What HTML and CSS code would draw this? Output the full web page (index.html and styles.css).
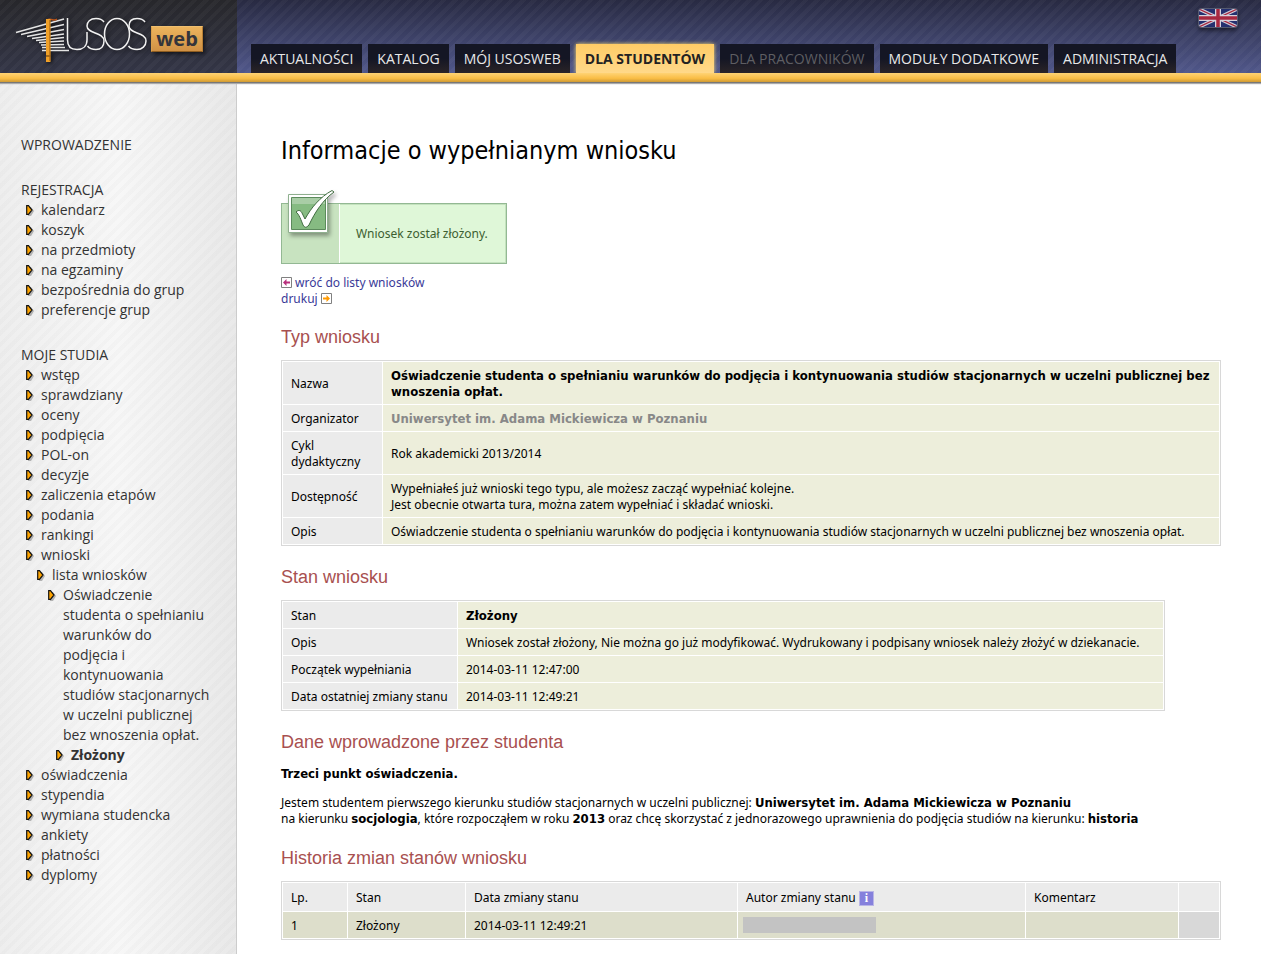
FILE: index.html
```html
<!DOCTYPE html>
<html lang="pl">
<head>
<meta charset="utf-8">
<title>USOSweb – Informacje o wypełnianym wniosku</title>
<link rel="stylesheet" href="styles.css">
</head>
<body>
<header class="top">
  <a class="brand" href="#" aria-label="USOSweb">
    <svg class="logo" width="200" height="60" viewBox="10 8 200 60" aria-hidden="true">
      <g stroke="#e4e4e4" fill="none" stroke-width="1.5">
        <path d="M16 32.500 64 19M21 34.500 64 24.500M27 36.500 64 29.500M32 38.500 64 34M36 40.500 64 37.500M39 42.500 64 41M41 45 64 44.500M42 47.500H65M42 50.500H69"/>
      </g>
      <path d="M48 19.500C52 18 54 22 57 19" stroke="#b8541c" stroke-width="1.500" fill="none"/>
      <path d="M46 19h4.500v43h-4.500z" fill="#f0a028"/><path d="M46 56h4.500" stroke="#5a3408"/>
      <path d="M49.800 20v41" stroke="#b06a14"/>
      <g stroke="#f2f2f2" fill="none" stroke-width="1.500">
        <path d="M67.500 18V40C67.500 46 71 49.500 77 49.500S87 46 87 40V32"/>
        <path d="M104 22C102 19 99 18.500 96 18.500 90 18.500 87 22 87 26 87 34 104 32 104 41 104 46 101 49.500 96 49.500 92 49.500 89 48 87.500 46"/>
        <ellipse cx="117" cy="34" rx="12.500" ry="15.500"/>
        <path d="M145 22C143 19 140 18.500 137 18.500 131 18.500 129 22 129 26 129 34 146 32 146 41 146 46 142 49.500 137 49.500 133 49.500 130 48 128.500 46"/>
      </g>
    </svg>
    <span class="web">web</span>
  </a>
  <nav class="tabs">
    <a href="#">AKTUALNOŚCI</a>
    <a href="#">KATALOG</a>
    <a href="#">MÓJ USOSWEB</a>
    <a href="#" class="on">DLA STUDENTÓW</a>
    <a href="#" class="off">DLA PRACOWNIKÓW</a>
    <a href="#">MODUŁY DODATKOWE</a>
    <a href="#">ADMINISTRACJA</a>
  </nav>
  <a class="flag" href="#" aria-label="English">
    <svg width="38" height="18" viewBox="0 0 38 18" aria-hidden="true">
      <path fill="#25306f" d="M0 0h38v18H0z"/>
      <path d="M0 0 38 18M38 0 0 18" stroke="#cfcbd6" stroke-width="3.500"/>
      <path d="M0 0 38 18M38 0 0 18" stroke="#a82840" stroke-width="1.200"/>
      <path d="M19 0v18M0 9h38" stroke="#d6d2dc" stroke-width="6"/>
      <path d="M19 0v18M0 9h38" stroke="#a82840" stroke-width="3.500"/>
    </svg>
  </a>
</header>
<div class="gold"></div>
<div class="page">
  <aside class="side">
    <section><h3><a href="#">WPROWADZENIE</a></h3></section>
    <section>
      <h3><a href="#">REJESTRACJA</a></h3>
      <ul>
        <li><a href="#">kalendarz</a></li>
        <li><a href="#">koszyk</a></li>
        <li><a href="#">na przedmioty</a></li>
        <li><a href="#">na egzaminy</a></li>
        <li><a href="#">bezpośrednia do grup</a></li>
        <li><a href="#">preferencje grup</a></li>
      </ul>
    </section>
    <section>
      <h3><a href="#">MOJE STUDIA</a></h3>
      <ul>
        <li><a href="#">wstęp</a></li>
        <li><a href="#">sprawdziany</a></li>
        <li><a href="#">oceny</a></li>
        <li><a href="#">podpięcia</a></li>
        <li><a href="#">POL-on</a></li>
        <li><a href="#">decyzje</a></li>
        <li><a href="#">zaliczenia etapów</a></li>
        <li><a href="#">podania</a></li>
        <li><a href="#">rankingi</a></li>
        <li><a href="#">wnioski</a></li>
        <li class="l2"><a href="#">lista wniosków</a></li>
        <li class="l3"><a href="#">Oświadczenie studenta o spełnianiu warunków do podjęcia&nbsp;i kontynuowania studiów stacjonarnych w&nbsp;uczelni publicznej bez wnoszenia opłat.</a></li>
        <li class="l4"><a href="#">Złożony</a></li>
        <li><a href="#">oświadczenia</a></li>
        <li><a href="#">stypendia</a></li>
        <li><a href="#">wymiana studencka</a></li>
        <li><a href="#">ankiety</a></li>
        <li><a href="#">płatności</a></li>
        <li><a href="#">dyplomy</a></li>
      </ul>
    </section>
  </aside>
  <main class="main">
    <h1>Informacje o wypełnianym wniosku</h1>
    <div class="msg">
      <div class="msg-side">
        <svg class="check" width="52" height="52" viewBox="0 0 52 52" aria-hidden="true">
          <path d="M6.500 5.500h39v38h-39z" fill="#fff" stroke="#8fb08f"/>
          <path d="M9.500 8.500h34v32h-34z" fill="#86bb82" stroke="#5c8a5c"/>
          <path d="M10 9h33v6H10z" fill="#a9cda6"/>
          <path d="M14 23C17 20 19 22 20 24L23 30C29 19 38 8 50 1.500L52 3C41 11 33 23 27 36 24 39 23 39 21 36 19 31 17 25 14 23Z" fill="#fff" stroke="#3f6b3f"/>
        </svg>
      </div>
      <p>Wniosek został złożony.</p>
    </div>
    <p class="links">
      <a href="#"><svg width="11" height="11" viewBox="0 0 11 11" aria-hidden="true"><path d="M.5.5h10v10H.5z" fill="#fff" stroke="#808080"/><path d="M2 5.500 5.500 2v2.500H9v2H5.500V9z" fill="#b8307c"/></svg> wróć do listy wniosków</a><br>
      <a href="#">drukuj <svg width="11" height="11" viewBox="0 0 11 11" aria-hidden="true"><path d="M.5.5h10v10H.5z" fill="#fff" stroke="#808080"/><path d="M9 5.500 5.500 2v2.500H2v2h3.500V9z" fill="#ff9a00"/></svg></a>
    </p>

    <h2>Typ wniosku</h2>
    <table class="grey kind">
      <tr><th scope="row">Nazwa</th><td><b>Oświadczenie studenta o spełnianiu warunków do podjęcia i kontynuowania studiów stacjonarnych w uczelni publicznej bez wnoszenia opłat.</b></td></tr>
      <tr><th scope="row">Organizator</th><td><b class="dim">Uniwersytet im. Adama Mickiewicza w Poznaniu</b></td></tr>
      <tr><th scope="row">Cykl dydaktyczny</th><td>Rok akademicki 2013/2014</td></tr>
      <tr><th scope="row">Dostępność</th><td>Wypełniałeś już wnioski tego typu, ale możesz zacząć wypełniać kolejne.<br>Jest obecnie otwarta tura, można zatem wypełniać i składać wnioski.</td></tr>
      <tr><th scope="row">Opis</th><td>Oświadczenie studenta o spełnianiu warunków do podjęcia i kontynuowania studiów stacjonarnych w uczelni publicznej bez wnoszenia opłat.</td></tr>
    </table>

    <h2>Stan wniosku</h2>
    <table class="grey state">
      <tr><th scope="row">Stan</th><td><b>Złożony</b></td></tr>
      <tr><th scope="row">Opis</th><td>Wniosek został złożony, Nie można go już modyfikować. Wydrukowany i podpisany wniosek należy złożyć w dziekanacie.</td></tr>
      <tr><th scope="row">Początek wypełniania</th><td>2014-03-11 12:47:00</td></tr>
      <tr><th scope="row">Data ostatniej zmiany stanu</th><td>2014-03-11 12:49:21</td></tr>
    </table>

    <h2>Dane wprowadzone przez studenta</h2>
    <div class="text">
      <p><b>Trzeci punkt oświadczenia.</b></p>
      <p>Jestem studentem pierwszego kierunku studiów stacjonarnych w uczelni publicznej: <b>Uniwersytet im. Adama Mickiewicza w Poznaniu</b><br>na kierunku <b>socjologia</b>, które rozpocząłem w roku <b>2013</b> oraz chcę skorzystać z jednorazowego uprawnienia do podjęcia studiów na kierunku: <b>historia</b></p>
    </div>

    <h2>Historia zmian stanów wniosku</h2>
    <table class="grey history">
      <colgroup><col class="c-no"><col class="c-state"><col class="c-date"><col class="c-author"><col class="c-note"><col class="c-end"></colgroup>
      <thead><tr><th>Lp.</th><th>Stan</th><th>Data zmiany stanu</th><th>Autor zmiany stanu <span class="info">i</span></th><th>Komentarz</th><th></th></tr></thead>
      <tbody><tr><td>1</td><td>Złożony</td><td>2014-03-11 12:49:21</td><td class="who"><span class="redacted"></span></td><td></td><td class="end"></td></tr></tbody>
    </table>
  </main>
</div>
</body>
</html>
```
FILE: styles.css
```css
* { box-sizing: border-box; }
body {
  margin: 0;
  min-height: 100vh;
  display: flex;
  flex-direction: column;
  background: #fff;
  color: #000;
  font: 12px/16px "Noto Sans", "Open Sans", sans-serif;
}
a { text-decoration: none; color: #3a3a98; }
h1, h2, h3, p, ul { margin: 0; padding: 0; font-weight: normal; }

.top {
  display: flex;
  height: 73px;
  background:
    repeating-linear-gradient(135deg, rgba(255,255,255,.03) 0 4px, transparent 4px 8px),
    linear-gradient(#282a42, #50578a);
}
.brand {
  display: flex;
  width: 237px;
  position: relative;
  padding: 8px 0 0 10px;
  background:
    repeating-linear-gradient(135deg, rgba(255,255,255,.03) 0 4px, transparent 4px 8px),
    linear-gradient(#27272b, #333546);
}
.logo { filter: drop-shadow(2px 2px 2px rgba(0,0,0,.6)); }
.web {
  position: absolute;
  left: 151px;
  top: 26px;
  width: 52px;
  height: 26px;
  border: 1px solid;
  border-color: #f0bf70 #b87f35 #8f5d20 #d99f4c;
  background: linear-gradient(#edb45d, #d09145);
  box-shadow: 2px 2px 4px rgba(0,0,0,.6);
  color: #35353b;
  font: bold 20px/23px "Open Sans", "Noto Sans", sans-serif;
  text-align: center;
}
.tabs {
  flex: 1;
  display: flex;
  align-items: flex-end;
  gap: 6px;
  padding-left: 14px;
  font: 14px/29px "Open Sans", "Noto Sans", sans-serif;
  white-space: nowrap;
}
.tabs a {
  padding: 0 9px;
  background: linear-gradient(#141624 50%, #2a2427);
  color: #e8e8e8;
}
.tabs .on {
  background: linear-gradient(#ffcc66, #ffd98a);
  box-shadow: 0 0 4px #ffe070;
  color: #222;
  font-weight: bold;
}
.tabs .off { color: #5e5e62; }
.flag { padding: 9px 24px 0 0; }
.flag svg {
  display: block;
  border-radius: 2px;
  outline: 1px solid #555a70;
  box-shadow: 0 3px 5px rgba(0,0,0,.6);
}
.gold {
  position: relative;
  height: 9px;
  background: linear-gradient(#ffd374, #f9bd45 60%, #cf9a34);
  box-shadow: 0 1px 0 #777, 0 2px 1px #aaa;
}

.page { flex: 1; display: flex; }
.side {
  width: 237px;
  flex: none;
  padding: 52px 22px 0 21px;
  border-right: 1px solid #ccc;
  background:
    repeating-linear-gradient(135deg, rgba(0,0,0,.014) 0 4px, transparent 4px 8px),
    linear-gradient(90deg, #eeeeee, #f7f7f7 50%, #e9e9e9);
  font: 14px/20px "Open Sans", "Noto Sans", sans-serif;
}
.side a { color: #333; }
.side section { margin-bottom: 24px; }
.side h3 { font-size: 14px; line-height: 21px; }
.side ul { list-style: none; }
.side li {
  padding-left: 20px;
  background: url("data:image/svg+xml,%3Csvg xmlns='http://www.w3.org/2000/svg' width='12' height='14'%3E%3Cpath d='M3 3h3l3 4-3 5H3z' fill='%23000' opacity='.25'/%3E%3Cpath d='M1.700 1.700H3.500L7 6 3.500 10.300H1.700z' fill='%23ffa500' stroke='%23111' stroke-width='1.200'/%3E%3C/svg%3E") 4px 4px no-repeat;
}
.side .l2 { margin-left: 11px; }
.side .l3 { margin-left: 22px; }
.side .l4 { margin-left: 30px; font-weight: bold; }

.main { flex: 1; min-width: 0; padding: 52px 40px 14px 44px; }
.main b { font: bold 13px/16px "DejaVu Sans Condensed", "DejaVu Sans", sans-serif; }
h1 { font: 25px/34px "DejaVu Sans Condensed", "DejaVu Sans", sans-serif; }
h2 {
  margin: 20px 0 12px;
  color: #a85050;
  font: 18px/22px "Liberation Sans", Arial, sans-serif;
}
.msg {
  display: flex;
  width: fit-content;
  height: 61px;
  margin-top: 35px;
  border: 1px solid #93b893;
  background: #dff7d8;
  box-shadow: inset 0 0 0 1px #c4e2be;
  color: #3c6030;
}
.msg-side {
  position: relative;
  width: 58px;
  border-right: 1px solid #fff;
  background: #c8e3c0;
}
.check {
  position: absolute;
  left: 0;
  top: -15px;
  filter: drop-shadow(2px 3px 2px rgba(0,0,0,.35));
}
.msg p { padding: 0 18px 0 16px; line-height: 60px; }
.links { margin-top: 11px; }
.links + h2 { margin-top: 19px; }
.links svg { vertical-align: -1px; }

.grey {
  border: 1px solid #d8d8d8;
  border-spacing: 1px;
  font: inherit;
}
.grey th, .grey td { padding: 6px 8px 4px; text-align: left; font-weight: normal; }
.grey th { background: #ebebeb; }
.grey td { background: #edeedb; }
.grey .dim { color: #888; }
.kind { width: 100%; }
.kind th { width: 99px; }
.state { width: 94%; }
.state th { width: 174px; }
.history { width: 100%; table-layout: fixed; }
.history th { height: 28px; }
.history td { height: 26px; background: #dddecb; }
.history .end { background: #d8d8d8; }
.c-no { width: 64px; }
.c-state { width: 117px; }
.c-date { width: 271px; }
.c-author { width: 287px; }
.c-end { width: 40px; }
.grey .who { padding: 5px; }
.redacted { display: block; width: 133px; height: 16px; background: #c3c3c3; }
.info {
  display: inline-block;
  width: 15px;
  height: 15px;
  border: 1px solid #b9b5e6;
  background: #8580dc;
  color: #fff;
  font: bold 12px/13px "Liberation Serif", serif;
  text-align: center;
}
.text { display: grid; gap: 13px; padding-top: 1px; }
```
